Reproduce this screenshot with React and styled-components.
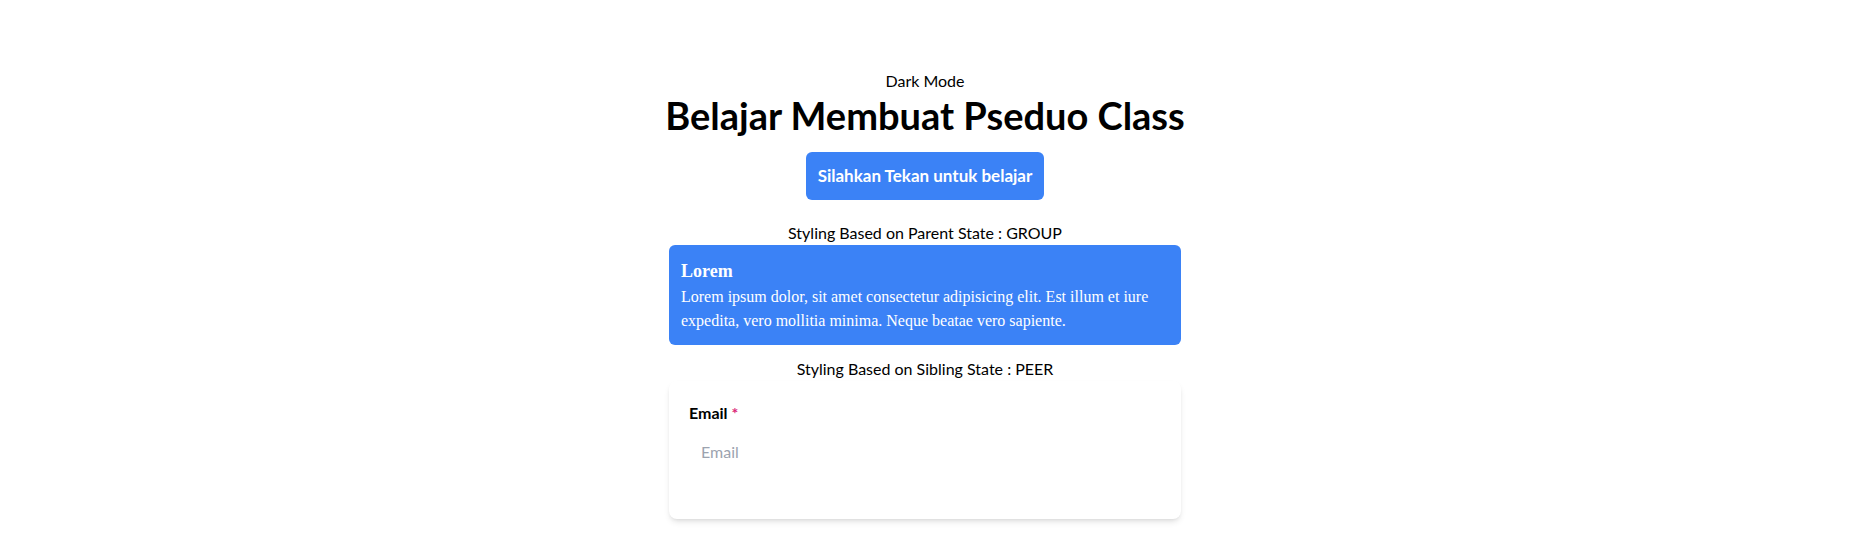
import React from 'react'
import styled, { createGlobalStyle } from 'styled-components'

const GlobalStyle = createGlobalStyle`
  * { box-sizing: border-box; }
  body {
    margin: 0;
    background: #fff;
    color: #000;
    font-family: Lato, "Liberation Sans", sans-serif;
    font-size: 16px;
    line-height: 24px;
  }
`

// right padding keeps the room the page scrollbar takes in the original
const Page = styled.main`
  min-height: 11000px;
  padding: 69px 15px 0 0;
  display: flex;
  flex-direction: column;
  align-items: center;
`

const ModeToggle = styled.button`
  border: 0;
  background: none;
  padding: 0;
  font: inherit;
  color: #000;
  cursor: pointer;
`

const Title = styled.h1`
  margin: 2px 0 0;
  font-size: 38px;
  line-height: 40px;
  font-weight: 700;
`

const LearnButton = styled.button`
  margin-top: 17px;
  height: 48px;
  padding: 0 12px;
  border: 0;
  border-radius: 6px;
  background: #3b82f6;
  color: #fff;
  font: inherit;
  font-size: 17px;
  font-weight: 700;
  cursor: pointer;
`

const Section = styled.section`
  width: 512px;
  margin-top: ${p => p.$gap}px;
  display: flex;
  flex-direction: column;
`

const Caption = styled.p`
  margin: 0;
  text-align: center;
`

const GroupCard = styled.div`
  padding: 12px;
  border-radius: 6px;
  background: #3b82f6;
  color: #fff;
  font-family: "Liberation Serif", serif;
`

const CardTitle = styled.h3`
  margin: 0;
  font-size: 18px;
  line-height: 28px;
  font-weight: 700;
`

const CardText = styled.p`
  margin: 0;
`

const FormCard = styled.form`
  padding: 20px;
  border-radius: 8px;
  background: #fff;
  box-shadow: 0 4px 6px -1px rgba(0, 0, 0, 0.1), 0 2px 4px -2px rgba(0, 0, 0, 0.1);
`

const Label = styled.label`
  display: block;
  font-weight: 700;
`

const Required = styled.span`
  color: #db2777;
`

const Input = styled.input`
  display: block;
  width: 100%;
  margin-top: 6px;
  padding: 8px 11px;
  border: 1px solid transparent;
  outline: none;
  font: inherit;
  color: #000;
  &::placeholder {
    color: #9ca3af;
  }
`

const ErrorText = styled.p`
  margin: 6px 0 0;
  font-size: 14px;
  line-height: 20px;
  color: #db2777;
  visibility: hidden;
`

export default function App() {
  return (
    <>
      <GlobalStyle />
      <Page>
        <ModeToggle>Dark Mode</ModeToggle>
        <Title>Belajar Membuat Pseduo Class</Title>
        <LearnButton>Silahkan Tekan untuk belajar</LearnButton>

        <Section $gap={21}>
          <Caption>Styling Based on Parent State : GROUP</Caption>
          <GroupCard>
            <CardTitle>Lorem</CardTitle>
            <CardText>
              Lorem ipsum dolor, sit amet consectetur adipisicing elit. Est illum et iure
              expedita, vero mollitia minima. Neque beatae vero sapiente.
            </CardText>
          </GroupCard>
        </Section>

        <Section $gap={12}>
          <Caption>Styling Based on Sibling State : PEER</Caption>
          <FormCard onSubmit={e => e.preventDefault()}>
            <Label htmlFor="email">
              Email <Required>*</Required>
            </Label>
            <Input id="email" type="email" placeholder="Email" />
            <ErrorText>Email tidak valid</ErrorText>
          </FormCard>
        </Section>
      </Page>
    </>
  )
}
